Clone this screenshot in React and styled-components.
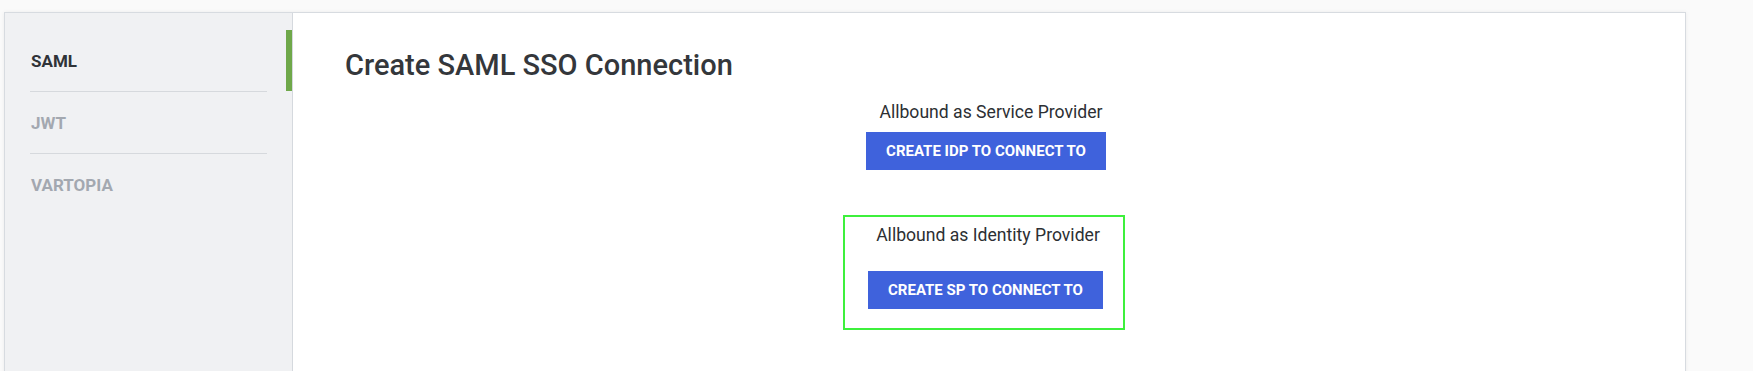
import React from "react";
import styled, { createGlobalStyle } from "styled-components";

const Global = createGlobalStyle`
  html, body { margin: 0; padding: 0; background: #fafafa; }
  body { font-family: Roboto, "Noto Sans", "Liberation Sans", sans-serif; }
`;

const Page = styled.div`
  padding: 12px 0 0 4px;
  height: 371px;
  box-sizing: border-box;
  overflow: hidden;
`;

const Card = styled.div`
  display: flex;
  width: 1682px;
  min-height: 420px;
  box-sizing: border-box;
  background: #fff;
  border: 1px solid #d7dbe0;
  box-shadow: 0 0 4px rgba(0, 0, 0, 0.06);
`;

const Sidebar = styled.nav`
  width: 288px;
  flex: none;
  box-sizing: border-box;
  background: #f0f1f3;
  border-right: 1px solid #d5d9de;
  padding: 17px 25px 0 25px;
`;

const NavItem = styled.div`
  position: relative;
  height: 61px;
  display: flex;
  align-items: center;
  padding-left: 1px;
  font-size: 17px;
  font-weight: 700;
  color: ${(p) => (p.$active ? "#2f3337" : "#a3a8b0")};
  border-bottom: ${(p) => (p.$last ? "none" : "1px solid #d6d9dd")};
  ${(p) =>
    p.$active &&
    `
    &::after {
      content: "";
      position: absolute;
      top: 0;
      right: -25px;
      width: 6px;
      height: 61px;
      background: #6fa84a;
    }
  `}
`;

const Main = styled.main`
  flex: 1;
  padding: 35px 48px 0 52px;
`;

const Title = styled.h1`
  margin: 0 0 20px 0;
  font-size: 29px;
  font-weight: 500;
  color: #34373b;
  line-height: 34px;
`;

const Options = styled.div`
  display: flex;
  flex-direction: column;
  align-items: center;
  gap: 45px;
`;

const Option = styled.div`
  display: flex;
  flex-direction: column;
  align-items: center;
  gap: ${(p) => (p.$boxed ? "25px" : "9px")};
  box-sizing: border-box;
  ${(p) =>
    p.$boxed &&
    `
    width: 282px;
    margin-right: 15px;
    padding: 8px 0 19px 9px;
    border: 2px solid #3ef03c;
  `}
`;

const Label = styled.div`
  font-size: 17.6px;
  color: #2c2f33;
  line-height: 21px;
`;

const Button = styled.button`
  height: 38px;
  padding: 0 19px;
  min-width: ${(p) => p.$w}px;
  margin-right: ${(p) => p.$shift || 0}px;
  border: none;
  border-radius: 0;
  background: #3f62dc;
  color: #fff;
  font-family: Roboto, "Liberation Sans", sans-serif;
  font-size: 15px;
  font-weight: 700;
  text-transform: uppercase;
  cursor: pointer;
`;

export default function App() {
  return (
    <>
      <Global />
      <Page>
        <Card>
          <Sidebar>
            <NavItem $active>SAML</NavItem>
            <NavItem>JWT</NavItem>
            <NavItem $last>VARTOPIA</NavItem>
          </Sidebar>
          <Main>
            <Title>Create SAML SSO Connection</Title>
            <Options>
              <Option>
                <Label>Allbound as Service Provider</Label>
                <Button $w={240} $shift={10}>Create IDP to connect to</Button>
              </Option>
              <Option $boxed>
                <Label>Allbound as Identity Provider</Label>
                <Button $w={235} $shift={5}>Create SP to connect to</Button>
              </Option>
            </Options>
          </Main>
        </Card>
      </Page>
    </>
  );
}
